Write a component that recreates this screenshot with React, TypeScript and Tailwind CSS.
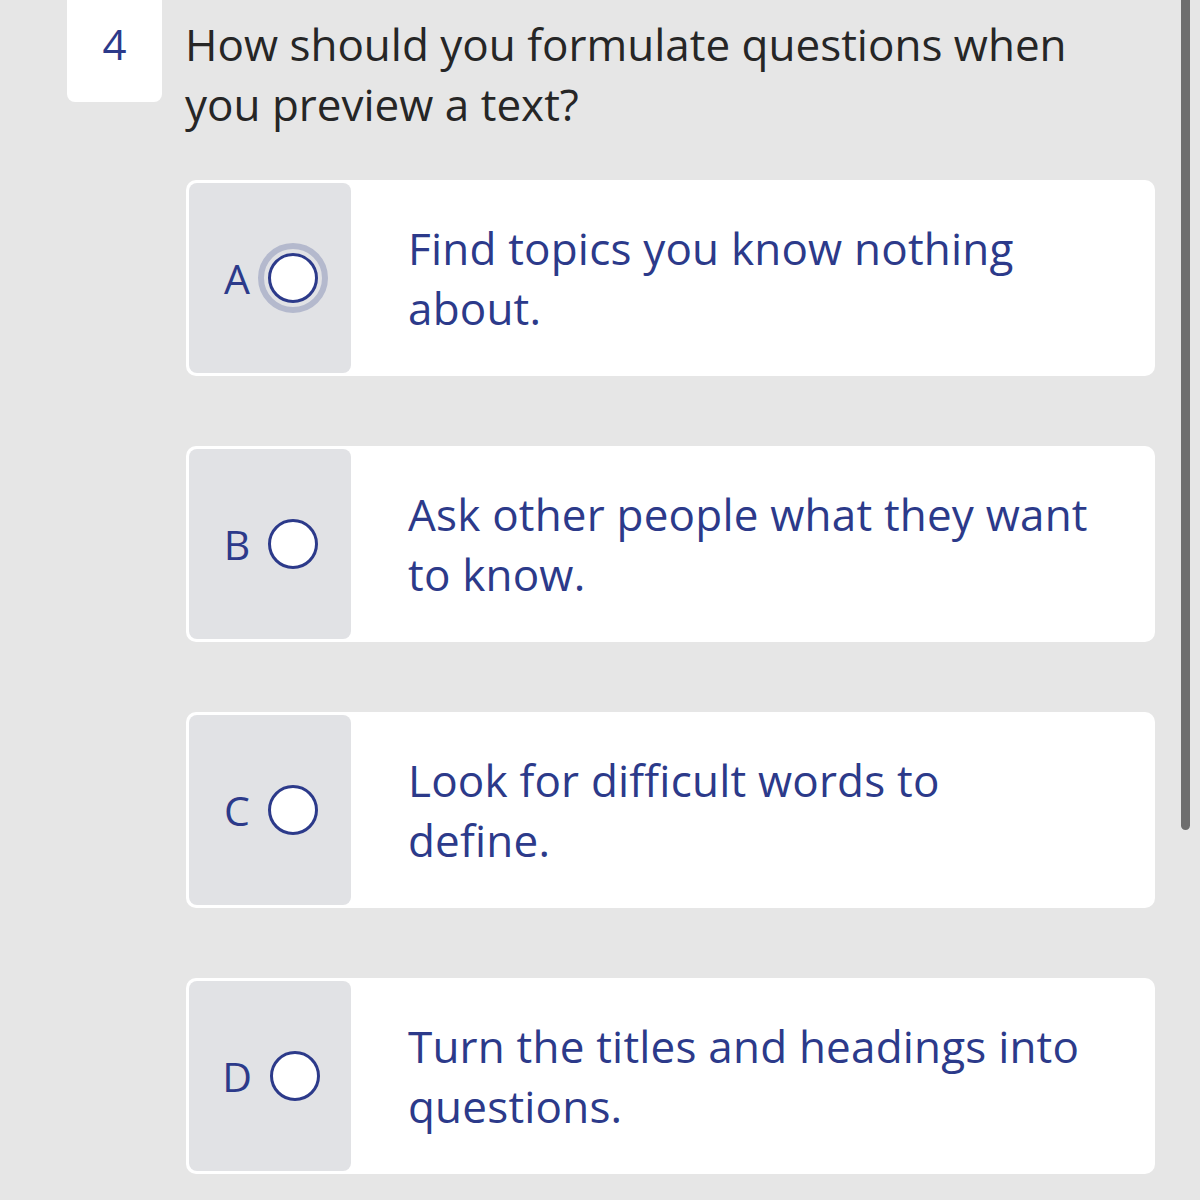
import React from "react";

const options = [
  { letter: "A", text: ["Find topics you know nothing", "about."], focused: true },
  { letter: "B", text: ["Ask other people what they want", "to know."], focused: false },
  { letter: "C", text: ["Look for difficult words to", "define."], focused: false },
  { letter: "D", text: ["Turn the titles and headings into", "questions."], focused: false },
];

function Radio({ focused }: { focused: boolean }) {
  return (
    <div className="relative w-[50px] h-[50px] flex items-center justify-center">
      {focused && (
        <div className="absolute inset-[-10px] rounded-full border-[6px] border-[#b4b9cd]" />
      )}
      <div className="w-[50px] h-[50px] rounded-full border-[3px] border-[#2c3a8a] bg-white" />
    </div>
  );
}

export default function App() {
  return (
    <div
      className="relative w-[1200px] h-[1200px] bg-[#e6e6e6] overflow-hidden"
      style={{ fontFamily: '"Open Sans", "Noto Sans", sans-serif' }}
    >
      <div className="flex pl-[67px]">
        <div className="w-[95px] h-[102px] bg-white rounded-b-[8px] flex justify-center pt-[14px] text-[42px] leading-[60px] text-[#2c3a8a]">
          4
        </div>
        <div className="ml-[23px] pt-[14px] text-[44px] leading-[60px] text-[#262626]">
          <div>How should you formulate questions when</div>
          <div>you preview a text?</div>
        </div>
      </div>
      <div className="ml-[186px] mt-[46px] w-[969px] flex flex-col gap-[70px]">
        {options.map((o) => (
          <div key={o.letter} className="h-[196px] bg-white rounded-[10px] p-[3px] flex">
            <div className="w-[162px] bg-[#e1e2e5] rounded-[8px] flex items-center justify-center gap-[18px] pl-[2px]">
              <span className="text-[41px] leading-none text-[#2c3a8a]">{o.letter}</span>
              <Radio focused={o.focused} />
            </div>
            <div className="flex flex-col justify-center pl-[57px] text-[44px] leading-[60px] text-[#2c3a8a] tracking-[0.2px]">
              {o.text.map((t) => (
                <div key={t}>{t}</div>
              ))}
            </div>
          </div>
        ))}
      </div>
      <div className="absolute left-[1181px] top-[-10px] w-[9px] h-[840px] rounded-full bg-[#6e6e6e]" />
    </div>
  );
}
